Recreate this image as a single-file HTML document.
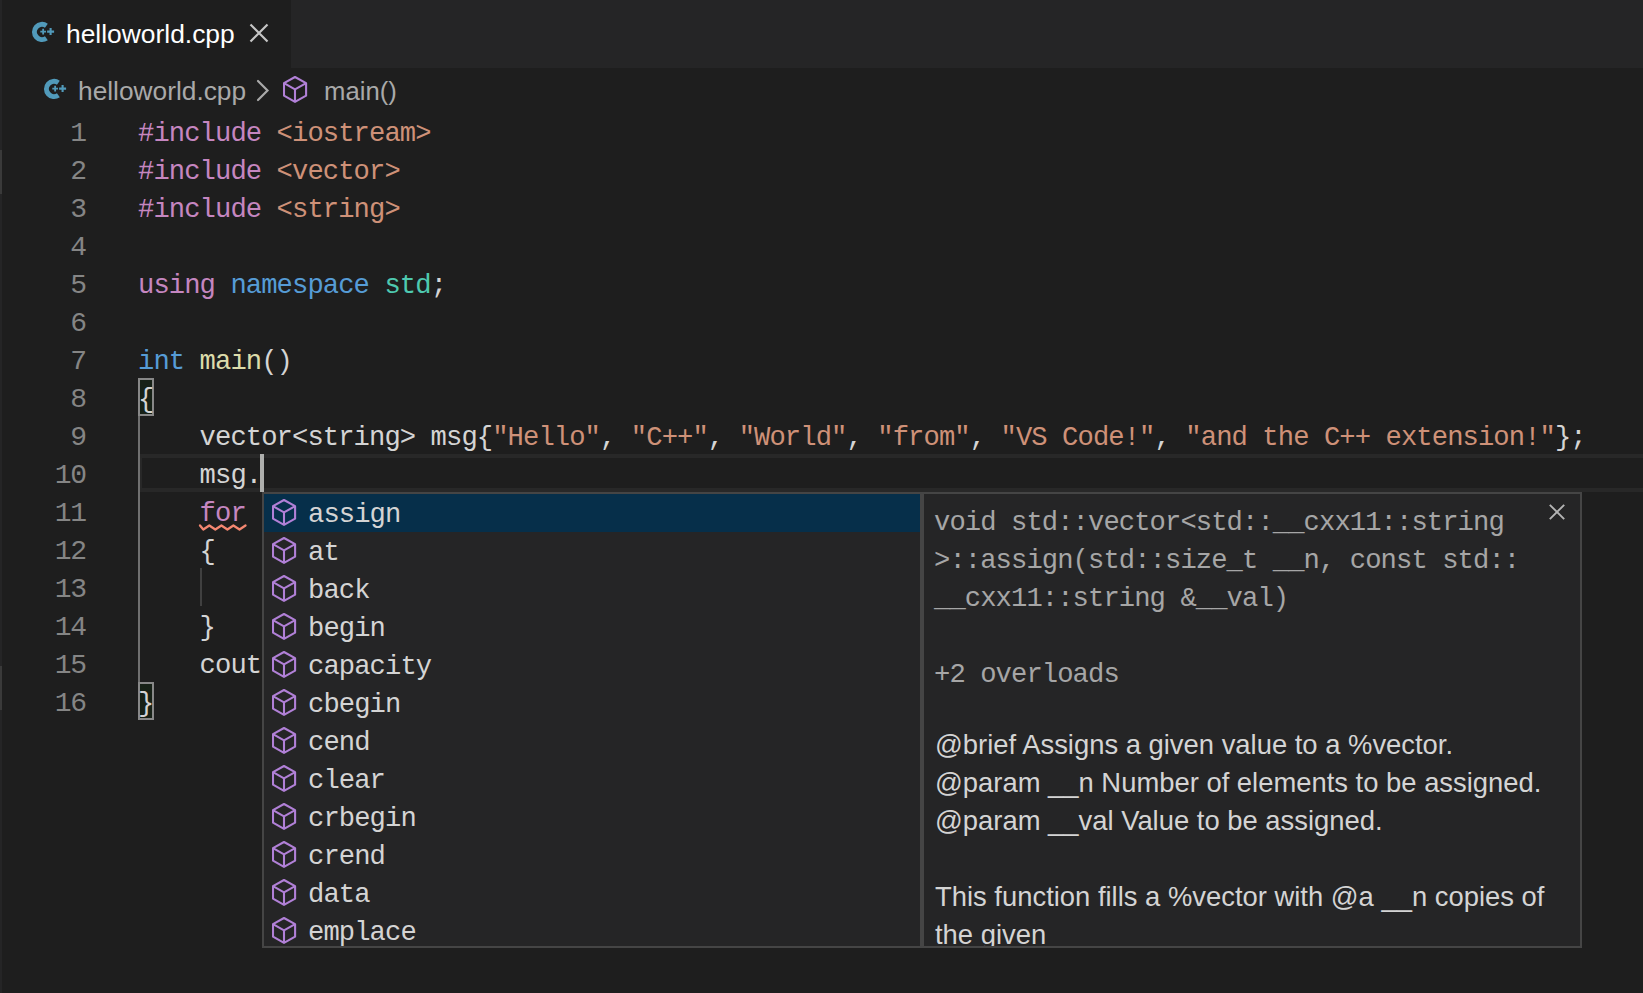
<!DOCTYPE html>
<html><head><meta charset="utf-8">
<style>
html,body{margin:0;padding:0;}
body{width:1643px;height:993px;overflow:hidden;background:#1e1e1e;position:relative;font-family:"Liberation Sans",sans-serif;}
.abs{position:absolute;}
#tabbar{left:0;top:0;width:1643px;height:68px;background:#252526;}
#tab{left:2px;top:0;width:289px;height:68px;background:#1e1e1e;}
#lstrip{left:0;top:68px;width:2px;height:925px;background:#252526;}
.ui{font-family:"Liberation Sans",sans-serif;white-space:pre;}
.mono{font-family:"Liberation Mono",monospace;font-size:27.2px;letter-spacing:-0.915px;line-height:38px;white-space:pre;}
.ln{left:0;width:85.6px;text-align:right;color:#858585;font-size:28px;letter-spacing:-1.4px;}
.code{left:138px;color:#d4d4d4;}
.k{color:#c586c0}.b{color:#569cd6}.s{color:#ce9178}.t{color:#4ec9b0}.f{color:#dcdcaa}
#sug{left:262px;top:492px;width:656px;height:452px;border:2px solid #454545;background:#252526;overflow:hidden;}
#docs{left:922px;top:492px;width:656px;height:452px;border:2px solid #454545;background:#252526;overflow:hidden;}
.row{position:absolute;left:0;width:656px;height:38px;}
.row.sel{background:#062f4a;}
.row svg{position:absolute;left:8px;top:4px;}
.row span{position:absolute;left:44px;top:0;color:#d4d4d4;}
</style></head><body>
<div id="tabbar" class="abs"></div>
<div id="tab" class="abs"></div>
<div id="lstrip" class="abs"></div>
<div class="abs" style="left:0;top:150px;width:2px;height:44px;background:#3a3a3a"></div>
<div class="abs" style="left:0;top:666px;width:2px;height:44px;background:#3a3a3a"></div>

<!-- tab content -->
<svg class="abs" style="left:28px;top:19px" width="30" height="26" viewBox="0 0 30 26"><path d="M18.4 6.7A7.6 7.6 0 1 0 18.4 19.2" stroke="#519aba" stroke-width="5" fill="none"/><path d="M12.3 12.6H18M15.15 9.8V15.4" stroke="#519aba" stroke-width="1.8" fill="none"/><path d="M19.1 12.6H26.1M22.6 9.1V16.1" stroke="#519aba" stroke-width="2.1" fill="none"/></svg>
<div class="abs ui" style="left:66px;top:15px;font-size:26.4px;line-height:38px;color:#ffffff">helloworld.cpp</div>
<svg class="abs" style="left:248px;top:22px" width="22" height="22" viewBox="0 0 22 22"><path d="M2.5 2.5L19.5 19.5M19.5 2.5L2.5 19.5" stroke="#c5c5c5" stroke-width="2.2" fill="none"/></svg>

<!-- breadcrumbs -->
<svg class="abs" style="left:40px;top:76px" width="30" height="26" viewBox="0 0 30 26"><path d="M18.4 6.7A7.6 7.6 0 1 0 18.4 19.2" stroke="#519aba" stroke-width="5" fill="none"/><path d="M12.3 12.6H18M15.15 9.8V15.4" stroke="#519aba" stroke-width="1.8" fill="none"/><path d="M19.1 12.6H26.1M22.6 9.1V16.1" stroke="#519aba" stroke-width="2.1" fill="none"/></svg>
<svg class="abs" style="left:254px;top:78px" width="18" height="26" viewBox="0 0 18 26"><path d="M4 3L13.5 12.5L4 22" stroke="#a9a9a9" stroke-width="2.2" fill="none" stroke-linecap="round"/></svg>
<svg class="abs" style="left:283px;top:75px" width="25" height="29" viewBox="0 0 25 29"><path d="M12 2L23.1 8.2V20.7L12 26.9L1 20.7V8.2Z M1 8.2L12 14.4L23.1 8.2 M12 14.4V26.9" stroke="#b180d7" stroke-width="2.1" fill="none" stroke-linejoin="round"/></svg>
<div class="abs ui" style="left:78px;top:72px;font-size:26.3px;line-height:38px;color:#a9a9a9">helloworld.cpp</div>
<div class="abs ui" style="left:324px;top:72px;font-size:25.7px;line-height:38px;color:#a9a9a9">main()</div>

<!-- line numbers -->
<div class="abs mono ln" style="top:114.5px">1
2
3
4
5
6
7
8
9
10
11
12
13
14
15
16</div>

<!-- line highlight -->
<div class="abs" style="left:140px;top:454px;width:1501px;height:30px;border-top:4px solid #282828;border-bottom:4px solid #282828;border-left:2px solid #282828;"></div>


<!-- indent guides -->
<div class="abs" style="left:138px;top:416px;width:2px;height:266px;background:#707070"></div>
<div class="abs" style="left:200px;top:568px;width:2px;height:38px;background:#404040"></div>
<!-- bracket match -->
<div class="abs" style="left:138px;top:378px;width:12px;height:34px;border:2px solid #888888;background:#172117"></div>
<div class="abs" style="left:138px;top:682px;width:12px;height:34px;border:2px solid #888888;background:#172117"></div>
<!-- squiggle -->
<svg class="abs" style="left:198px;top:520.7px" width="52" height="14" viewBox="0 0 52 14"><path d="M2 4.5L5.3 8.5L11.3 4.5L17.3 8.5L23.4 4.5L29.4 8.5L35.4 4.5L41.5 8.5L47.5 4.5" stroke="#f48771" stroke-width="2.3" fill="none" stroke-linejoin="round" stroke-linecap="round"/></svg>
<div class="abs mono code" style="top:115px"><span class="k">#include</span> <span class="s">&lt;iostream&gt;</span>
<span class="k">#include</span> <span class="s">&lt;vector&gt;</span>
<span class="k">#include</span> <span class="s">&lt;string&gt;</span>

<span class="k">using</span> <span class="b">namespace</span> <span class="t">std</span>;

<span class="b">int</span> <span class="f">main</span>()
{
    vector&lt;string&gt; msg{<span class="s">"Hello"</span>, <span class="s">"C++"</span>, <span class="s">"World"</span>, <span class="s">"from"</span>, <span class="s">"VS Code!"</span>, <span class="s">"and the C++ extension!"</span>};
    msg.
    <span class="k">for</span>
    {

    }
    cout
}</div>

<div class="abs" style="left:260px;top:454px;width:4px;height:38px;background:#aeafad"></div>
<div id="sug" class="abs mono">
<div class="row sel" style="top:0px"><svg width="25" height="29" viewBox="0 0 25 29"><path d="M12 2L23.1 8.2V20.7L12 26.9L1 20.7V8.2Z M1 8.2L12 14.4L23.1 8.2 M12 14.4V26.9" stroke="#b180d7" stroke-width="2.1" fill="none" stroke-linejoin="round"/></svg><span style="top:2px">assign</span></div>
<div class="row" style="top:38px"><svg width="25" height="29" viewBox="0 0 25 29"><path d="M12 2L23.1 8.2V20.7L12 26.9L1 20.7V8.2Z M1 8.2L12 14.4L23.1 8.2 M12 14.4V26.9" stroke="#b180d7" stroke-width="2.1" fill="none" stroke-linejoin="round"/></svg><span style="top:2px">at</span></div>
<div class="row" style="top:76px"><svg width="25" height="29" viewBox="0 0 25 29"><path d="M12 2L23.1 8.2V20.7L12 26.9L1 20.7V8.2Z M1 8.2L12 14.4L23.1 8.2 M12 14.4V26.9" stroke="#b180d7" stroke-width="2.1" fill="none" stroke-linejoin="round"/></svg><span style="top:2px">back</span></div>
<div class="row" style="top:114px"><svg width="25" height="29" viewBox="0 0 25 29"><path d="M12 2L23.1 8.2V20.7L12 26.9L1 20.7V8.2Z M1 8.2L12 14.4L23.1 8.2 M12 14.4V26.9" stroke="#b180d7" stroke-width="2.1" fill="none" stroke-linejoin="round"/></svg><span style="top:2px">begin</span></div>
<div class="row" style="top:152px"><svg width="25" height="29" viewBox="0 0 25 29"><path d="M12 2L23.1 8.2V20.7L12 26.9L1 20.7V8.2Z M1 8.2L12 14.4L23.1 8.2 M12 14.4V26.9" stroke="#b180d7" stroke-width="2.1" fill="none" stroke-linejoin="round"/></svg><span style="top:2px">capacity</span></div>
<div class="row" style="top:190px"><svg width="25" height="29" viewBox="0 0 25 29"><path d="M12 2L23.1 8.2V20.7L12 26.9L1 20.7V8.2Z M1 8.2L12 14.4L23.1 8.2 M12 14.4V26.9" stroke="#b180d7" stroke-width="2.1" fill="none" stroke-linejoin="round"/></svg><span style="top:2px">cbegin</span></div>
<div class="row" style="top:228px"><svg width="25" height="29" viewBox="0 0 25 29"><path d="M12 2L23.1 8.2V20.7L12 26.9L1 20.7V8.2Z M1 8.2L12 14.4L23.1 8.2 M12 14.4V26.9" stroke="#b180d7" stroke-width="2.1" fill="none" stroke-linejoin="round"/></svg><span style="top:2px">cend</span></div>
<div class="row" style="top:266px"><svg width="25" height="29" viewBox="0 0 25 29"><path d="M12 2L23.1 8.2V20.7L12 26.9L1 20.7V8.2Z M1 8.2L12 14.4L23.1 8.2 M12 14.4V26.9" stroke="#b180d7" stroke-width="2.1" fill="none" stroke-linejoin="round"/></svg><span style="top:2px">clear</span></div>
<div class="row" style="top:304px"><svg width="25" height="29" viewBox="0 0 25 29"><path d="M12 2L23.1 8.2V20.7L12 26.9L1 20.7V8.2Z M1 8.2L12 14.4L23.1 8.2 M12 14.4V26.9" stroke="#b180d7" stroke-width="2.1" fill="none" stroke-linejoin="round"/></svg><span style="top:2px">crbegin</span></div>
<div class="row" style="top:342px"><svg width="25" height="29" viewBox="0 0 25 29"><path d="M12 2L23.1 8.2V20.7L12 26.9L1 20.7V8.2Z M1 8.2L12 14.4L23.1 8.2 M12 14.4V26.9" stroke="#b180d7" stroke-width="2.1" fill="none" stroke-linejoin="round"/></svg><span style="top:2px">crend</span></div>
<div class="row" style="top:380px"><svg width="25" height="29" viewBox="0 0 25 29"><path d="M12 2L23.1 8.2V20.7L12 26.9L1 20.7V8.2Z M1 8.2L12 14.4L23.1 8.2 M12 14.4V26.9" stroke="#b180d7" stroke-width="2.1" fill="none" stroke-linejoin="round"/></svg><span style="top:2px">data</span></div>
<div class="row" style="top:418px"><svg width="25" height="29" viewBox="0 0 25 29"><path d="M12 2L23.1 8.2V20.7L12 26.9L1 20.7V8.2Z M1 8.2L12 14.4L23.1 8.2 M12 14.4V26.9" stroke="#b180d7" stroke-width="2.1" fill="none" stroke-linejoin="round"/></svg><span style="top:2px">emplace</span></div>
</div>
<div id="docs" class="abs"></div>
<svg class="abs" style="left:1547px;top:502px" width="20" height="20" viewBox="0 0 20 20"><path d="M2.8 2.8L17.2 17.2M17.2 2.8L2.8 17.2" stroke="#b4b4b4" stroke-width="1.9" fill="none"/></svg>
<div class="abs mono" style="left:934px;top:504px;color:#a6a6a6">void std::vector&lt;std::__cxx11::string
&gt;::assign(std::size_t __n, const std::
__cxx11::string &amp;__val)

+2 overloads</div>
<div class="abs" style="left:922px;top:494px;width:658px;height:452px;overflow:hidden">
<div class="abs ui" style="left:13px;top:232px;font-size:27.4px;line-height:38px;color:#d4d4d4">@brief Assigns a given value to a %vector.
@param __n Number of elements to be assigned.
@param __val Value to be assigned.

This function fills a %vector with @a __n copies of
the given</div></div>
</body></html>
